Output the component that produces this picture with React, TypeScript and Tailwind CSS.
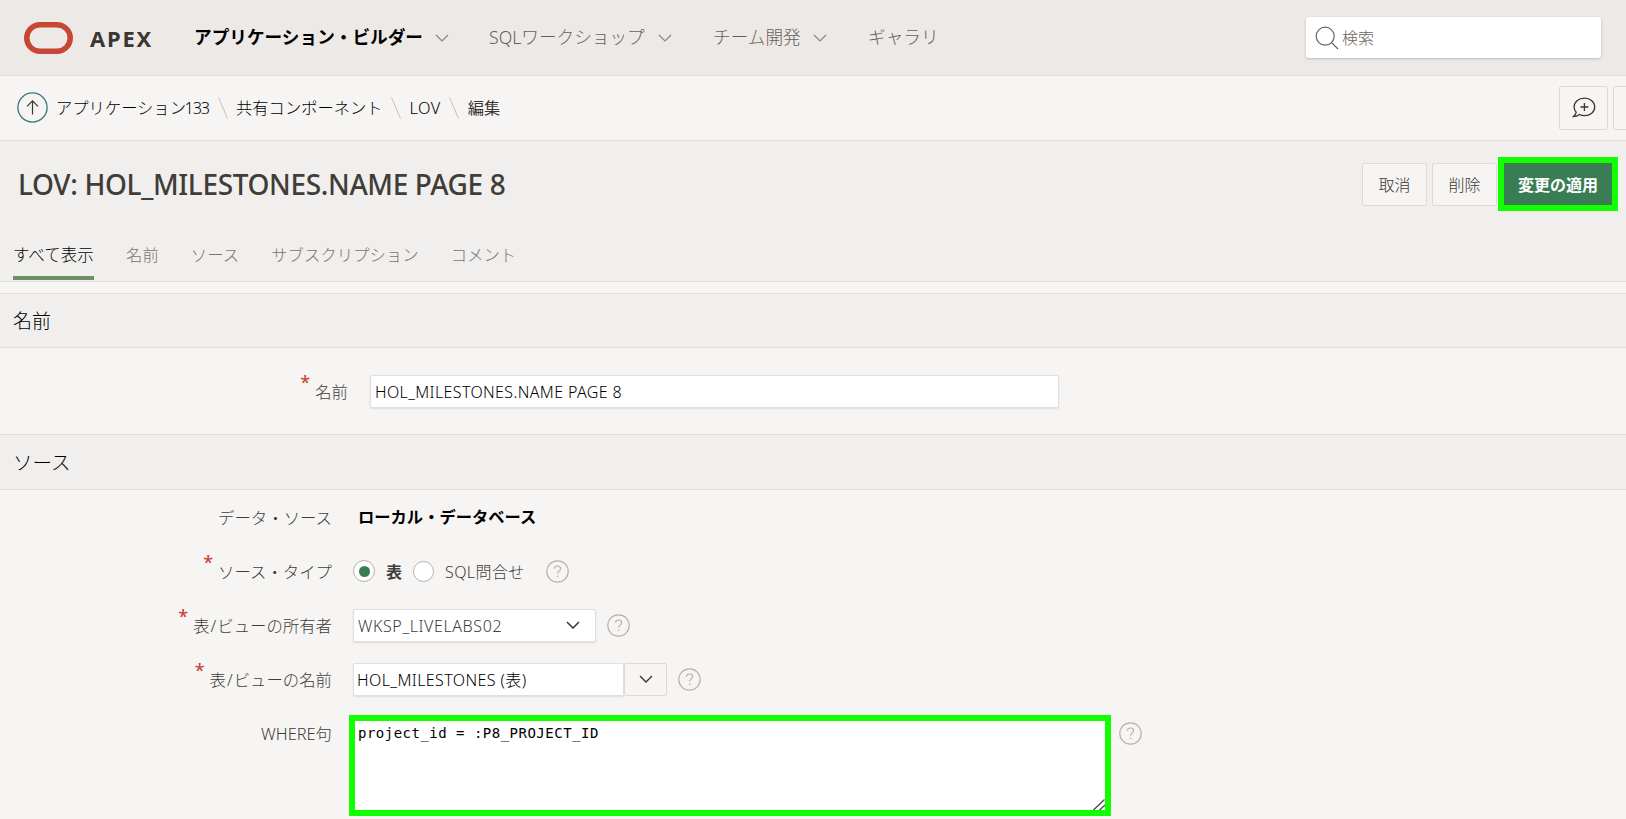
import type { ReactNode } from 'react';

const Chevron = ({ className = '', w = 14, sw = 1.2 }: { className?: string; w?: number; sw?: number }) => (
  <svg className={`shrink-0 ${className}`} width={w} height="8" viewBox="0 0 14 8" fill="none" stroke="currentColor" strokeWidth={sw}>
    <path d="M1 1 L7 7 L13 1" />
  </svg>
);

const Help = ({ className = '' }: { className?: string }) => (
  <svg className={`h-[23px] w-[23px] shrink-0 text-[#b5b2af] ${className}`} viewBox="0 0 23 23" fill="none" stroke="currentColor">
    <circle cx="11.5" cy="11.5" r="10.7" strokeWidth="1.2" />
    <path d="M8.4 8.6 C8.5 6.9 9.8 6 11.5 6 C13.3 6 14.6 7 14.6 8.7 C14.6 10.8 11.6 11 11.6 13.6" strokeWidth="1.2" />
    <path d="M11.6 15.6 V17" strokeWidth="1.4" />
  </svg>
);

const Slash = () => (
  <svg className="mx-[8.5px] shrink-0" width="10" height="22" viewBox="0 0 10 22" fill="none" stroke="#c4c1be" strokeWidth="1">
    <path d="M0.5 0.5 L9.5 21.5" />
  </svg>
);

const Label = ({ children, required, width }: { children: ReactNode; required?: boolean; width: string }) => (
  <div className={`${width} flex h-8 shrink-0 items-center justify-end pt-0.5 text-[16.4px] text-[#403c38]`}>
    {required && <span className="mr-[5px] -mt-[20px] text-[18px] font-medium leading-none text-[#c74634]">*</span>}
    <span>{children}</span>
  </div>
);

const Band = ({ children, className }: { children: ReactNode; className: string }) => (
  <h2 className={`${className} flex items-center border-y border-[#e2e0de] bg-[#f0efed] px-[13px] text-black`}>{children}</h2>
);

const fieldBox = 'border border-[#e2e0de] rounded-[2px] bg-white shadow-[0_1px_2px_rgba(0,0,0,0.1)]';
const plainButton = 'flex shrink-0 items-center justify-center rounded-[2px] border border-[#dddbd8] bg-[#f6f5f3] text-[#3a3632]';

export default function App() {
  return (
    <div className="h-[819px] w-full overflow-hidden bg-[#f6f5f3] font-['Noto_Sans','Noto_Sans_CJK_JP',sans-serif] text-[16px] font-light leading-6 whitespace-nowrap">
      <header className="flex h-[76px] items-center border-b border-[#e2e0de] bg-[#ede9e6] pl-6 pr-[25px] text-[17.65px] text-[#66615c]">
        <svg className="shrink-0" width="49" height="32" viewBox="0 0 49 32">
          <rect x="2.75" y="2.75" width="43.5" height="26.5" rx="13.25" fill="none" stroke="#c74634" strokeWidth="5.5" />
        </svg>
        <span className="ml-[17px] w-[104px] text-[22px] font-bold tracking-[1.8px] text-[#3a3632]">APEX</span>
        <nav className="flex flex-1 items-center pb-0.5">
          <span className="flex w-[295px] items-center font-bold text-black">アプリケーション・ビルダー<Chevron className="ml-3 mt-0.5 text-[#8b8580]" /></span>
          <span className="flex w-[224px] items-center">SQLワークショップ<Chevron className="ml-[13px] mt-0.5 text-[#8b8580]" /></span>
          <span className="flex w-[155px] items-center">チーム開発<Chevron className="ml-3 mt-0.5 text-[#8b8580]" /></span>
          <span>ギャラリ</span>
        </nav>
        <div className="flex h-[41px] w-[295px] items-center rounded-[3px] bg-white pl-[9px] text-[16px] text-[#6b6560] shadow-[0_1px_3px_rgba(0,0,0,0.2)]">
          <svg width="24" height="24" viewBox="0 0 24 24" fill="none" stroke="#6b6560" strokeWidth="1.2">
            <circle cx="10.2" cy="10.2" r="9" />
            <path d="M16.6 16.6 L23 23" />
          </svg>
          <span className="ml-[3px]">検索</span>
        </div>
      </header>

      <div className="flex h-[65px] items-center border-b border-[#e2e0de] pl-[17px] text-[16.3px] text-black">
        <svg className="-mt-px shrink-0" width="31" height="31" viewBox="0 0 31 31" fill="none">
          <circle cx="15.5" cy="15.5" r="14.6" stroke="#3f7681" strokeWidth="1.3" />
          <path d="M15.5 22.5 V9 M10 14.3 L15.5 8.8 L21 14.3" stroke="#3a3632" strokeWidth="1.2" />
        </svg>
        <span className="ml-2">アプリケーション<span className="-ml-[1.5px] tracking-[-1.1px]">133</span></span>
        <Slash />
        <span>共有コンポーネント</span>
        <Slash />
        <span className="tracking-[0.4px]">LOV</span>
        <Slash />
        <span className="font-normal text-[#3a3632]">編集</span>
        <span className={`${plainButton} ml-auto h-11 w-[49px]`}>
          <svg className="-mt-0.5" width="24" height="21" viewBox="0 0 24 21" fill="none" stroke="#3a3632" strokeWidth="1.3">
            <path d="M4.2 15.3 C2.8 13.8 2.1 11.9 2.1 10 C2.1 5 6.5 1.2 12.4 1.2 C18.3 1.2 22.7 5 22.7 10 C22.7 15 18.3 18.6 12.4 18.6 C10.6 18.6 8.9 18.2 7.5 17.5 C5.8 19 3.8 19.7 1.2 19.7 C2.8 18.5 3.8 17 4.2 15.3 Z" />
            <path d="M12.4 6 V14 M8.4 10 H16.4" />
          </svg>
        </span>
        <span className={`${plainButton} ml-[5px] -mr-[36px] h-11 w-[49px]`} />
      </div>

      <section className="flex h-[141px] flex-col border-b border-[#e2e0de] bg-[#f0efed]">
        <div className="flex h-[86px] items-center pl-[18px] pr-2">
          <h1 className="flex-1 text-[28px] font-medium leading-10 tracking-[-0.36px] text-[#403c38]">LOV: HOL_MILESTONES.NAME PAGE 8</h1>
          <div className="flex items-center">
            <span className={`${plainButton} h-[43px] w-[65px] pt-0.5`}>取消</span>
            <span className={`${plainButton} ml-[5px] h-[43px] w-[65px] pt-0.5`}>削除</span>
            <span className="ml-px flex h-[54px] w-[120px] items-center justify-center border-6 border-[#11ff00] bg-[#3a7d55] pt-0.5 font-bold text-white">変更の適用</span>
          </div>
        </div>
        <div className="flex h-[53px] gap-8 pl-[13px] text-[16.4px] text-[#7a7570]">
          <span className="flex w-[81px] items-center border-b-4 border-[#6b9063] pt-[6px] text-[16.5px] text-black">すべて表示</span>
          <span className="flex items-center pt-0.5">名前</span>
          <span className="flex items-center pt-0.5">ソース</span>
          <span className="flex items-center pt-0.5">サブスクリプション</span>
          <span className="flex items-center pt-0.5">コメント</span>
        </div>
      </section>

      <Band className="mt-[11px] h-[55px] text-[19px]">名前</Band>
      <div className="flex h-[86px] items-center">
        <Label required width="w-[348px]">名前</Label>
        <div className={`${fieldBox} ml-[22px] flex h-[33px] w-[689px] items-center pt-0.5 pl-1 tracking-[0.37px] text-black`}>HOL_MILESTONES.NAME PAGE 8</div>
      </div>

      <Band className="h-14 pt-0.5 text-[19.5px]">ソース</Band>
      <div className="flex flex-col gap-[22px] pt-[11px]">
        <div className="flex h-8 items-center">
          <Label width="w-[332px]">データ・ソース</Label>
          <span className="ml-[26px] text-[16.3px] font-bold text-black">ローカル・データベース</span>
        </div>
        <div className="flex h-8 items-center text-[#403c38]">
          <Label required width="w-[332px]">ソース・タイプ</Label>
          <span className="ml-[21px] flex h-[22px] w-[22px] items-center justify-center rounded-full border border-[#b5b2af] bg-white">
            <span className="h-[11px] w-[11px] rounded-full bg-[#3a7d55]" />
          </span>
          <span className="ml-[11px] pt-px font-bold">表</span>
          <span className="ml-[11px] h-[21px] w-[21px] rounded-full border border-[#b5b2af] bg-white" />
          <span className="ml-[11px] w-[101px] pt-0.5 tracking-[0.4px]">SQL問合せ</span>
          <Help />
        </div>
        <div className="flex h-8 items-center">
          <Label required width="w-[332px]">表<span className="mx-px">/</span>ビューの所有者</Label>
          <div className={`${fieldBox} ml-[21px] flex h-[33px] w-[243px] items-center justify-between pl-1 pr-[15px] tracking-[0.6px] text-[#403c38]`}>
            <span className="pt-0.5">WKSP_LIVELABS02</span>
            <Chevron sw={1.6} />
          </div>
          <Help className="ml-[11px]" />
        </div>
        <div className="flex h-8 items-center">
          <Label required width="w-[332px]">表<span className="mx-px">/</span>ビューの名前</Label>
          <div className={`${fieldBox} ml-[21px] flex h-[33px] w-[271px] items-center pt-0.5 pl-[3px] tracking-[0.4px] text-black`}>HOL_MILESTONES (表)</div>
          <span className={`${plainButton} h-[33px] w-[43px]`}><Chevron sw={1.4} /></span>
          <Help className="ml-[11px]" />
        </div>
        <div className="flex items-start">
          <Label width="w-[332px]">WHERE句</Label>
          <div className="relative ml-[17px] -mt-[2px] h-[101px] w-[762px] border-6 border-[#11ff00] bg-white pl-[3px] pt-px font-['DejaVu_Sans_Mono',monospace] text-[14px] font-normal leading-[22px] tracking-[0.49px] text-black">
            project_id = :P8_PROJECT_ID
            <svg className="absolute bottom-0 right-0" width="12" height="11" viewBox="0 0 12 11" fill="none" stroke="#4a4a4a" strokeWidth="1.3">
              <path d="M0.5 11 L11.5 0.5 M6.5 11 L12 6" />
            </svg>
          </div>
          <Help className="ml-2 mt-[5px]" />
        </div>
      </div>
    </div>
  );
}
